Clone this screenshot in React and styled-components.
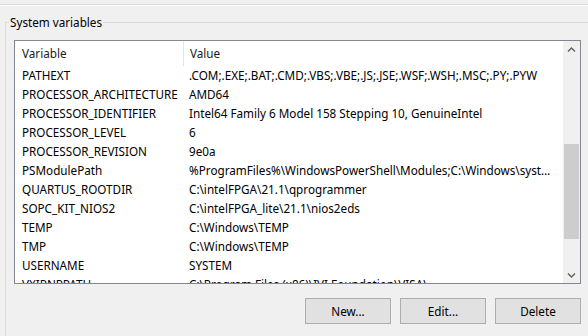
import React from "react";
import styled, { createGlobalStyle } from "styled-components";

const GlobalStyle = createGlobalStyle`
  html, body {
    margin: 0;
    padding: 0;
    background: #f0f0f0;
    overflow: hidden;
  }
  body {
    font-family: "Noto Sans", "Open Sans", sans-serif;
    font-size: 11.7px;
    color: #000;
  }
`;

const Page = styled.div`
  width: 588px;
  height: 336px;
  overflow: hidden;
  background: #f0f0f0;
`;

const TopEdge = styled.div`
  height: 4px;
  border-bottom: 1px solid #dcdcdc;
  box-shadow: 0 1px 0 #ffffff;
`;

const GroupBox = styled.fieldset`
  margin: 9px 0 0 5px;
  width: 620px;
  padding: 0 0 20px 8px;
  border: 1px solid #dcdcdc;
  min-width: 0;

  & > legend {
    margin-left: -5px;
    padding: 0 1px;
    line-height: 16px;
  }
`;

const ListBox = styled.div`
  margin-top: 10px;
  width: 565px;
  height: 242px;
  border: 1px solid #828790;
  background: #fff;
  display: flex;
  overflow: hidden;
`;

const ListContent = styled.div`
  flex: 1;
  min-width: 0;
  overflow: hidden;
`;

const Row = styled.div`
  display: grid;
  grid-template-columns: 168px 368px;
  height: ${p => (p.$header ? 25 : 19)}px;
  line-height: ${p => (p.$header ? 25 : 19)}px;
  white-space: nowrap;
`;

const Cell = styled.div`
  padding-left: ${p => (p.$value ? 6 : 7)}px;
  overflow: hidden;
  text-overflow: ellipsis;
  border-left: ${p => (p.$sep ? "1px solid #e5e5e5" : "none")};
`;

const HeaderCell = styled(Cell)`
  color: #1a1a1a;
`;

const ScrollBar = styled.div`
  width: 17px;
  background: #f0f0f0;
  display: flex;
  flex-direction: column;
`;

const ScrollButton = styled.div`
  height: 17px;
  display: flex;
  align-items: center;
  justify-content: center;
`;

const Track = styled.div`
  flex: 1;
  padding-top: 86px;
`;

const Thumb = styled.div`
  height: 95px;
  margin: 0 1px;
  background: #cdcdcd;
`;

const ButtonRow = styled.div`
  display: flex;
  justify-content: flex-end;
  gap: 9px;
  width: 567px;
  margin-top: 14px;
`;

const Button = styled.button`
  width: 86px;
  height: 26px;
  border: 1px solid #adadad;
  background: #e1e1e1;
  font-family: inherit;
  font-size: 11.7px;
  color: #000;
  padding: 0;
`;

const Chevron = ({ down }) => (
  <svg width="9" height="6" viewBox="0 0 9 6">
    <path
      d={down ? "M1 1.5 L4.5 5 L8 1.5" : "M1 4.5 L4.5 1 L8 4.5"}
      fill="none"
      stroke="#606060"
      strokeWidth="1.4"
    />
  </svg>
);

const variables = [
  ["PATHEXT", ".COM;.EXE;.BAT;.CMD;.VBS;.VBE;.JS;.JSE;.WSF;.WSH;.MSC;.PY;.PYW"],
  ["PROCESSOR_ARCHITECTURE", "AMD64"],
  ["PROCESSOR_IDENTIFIER", "Intel64 Family 6 Model 158 Stepping 10, GenuineIntel"],
  ["PROCESSOR_LEVEL", "6"],
  ["PROCESSOR_REVISION", "9e0a"],
  ["PSModulePath", "%ProgramFiles%\\WindowsPowerShell\\Modules;C:\\Windows\\system32\\WindowsPowerShell\\v1.0\\Modules"],
  ["QUARTUS_ROOTDIR", "C:\\intelFPGA\\21.1\\qprogrammer"],
  ["SOPC_KIT_NIOS2", "C:\\intelFPGA_lite\\21.1\\nios2eds"],
  ["TEMP", "C:\\Windows\\TEMP"],
  ["TMP", "C:\\Windows\\TEMP"],
  ["USERNAME", "SYSTEM"],
  ["VXIPNPPATH", "C:\\Program Files (x86)\\IVI Foundation\\VISA\\"],
];

export default function App() {
  return (
    <Page>
      <GlobalStyle />
      <TopEdge />
      <GroupBox>
        <legend>System variables</legend>
        <ListBox>
          <ListContent>
            <Row $header>
              <HeaderCell>Variable</HeaderCell>
              <HeaderCell $value $sep>Value</HeaderCell>
            </Row>
            {variables.map(([name, value]) => (
              <Row key={name}>
                <Cell>{name}</Cell>
                <Cell $value>{value}</Cell>
              </Row>
            ))}
          </ListContent>
          <ScrollBar>
            <ScrollButton><Chevron /></ScrollButton>
            <Track><Thumb /></Track>
            <ScrollButton><Chevron down /></ScrollButton>
          </ScrollBar>
        </ListBox>
        <ButtonRow>
          <Button>New...</Button>
          <Button>Edit...</Button>
          <Button>Delete</Button>
        </ButtonRow>
      </GroupBox>
    </Page>
  );
}
